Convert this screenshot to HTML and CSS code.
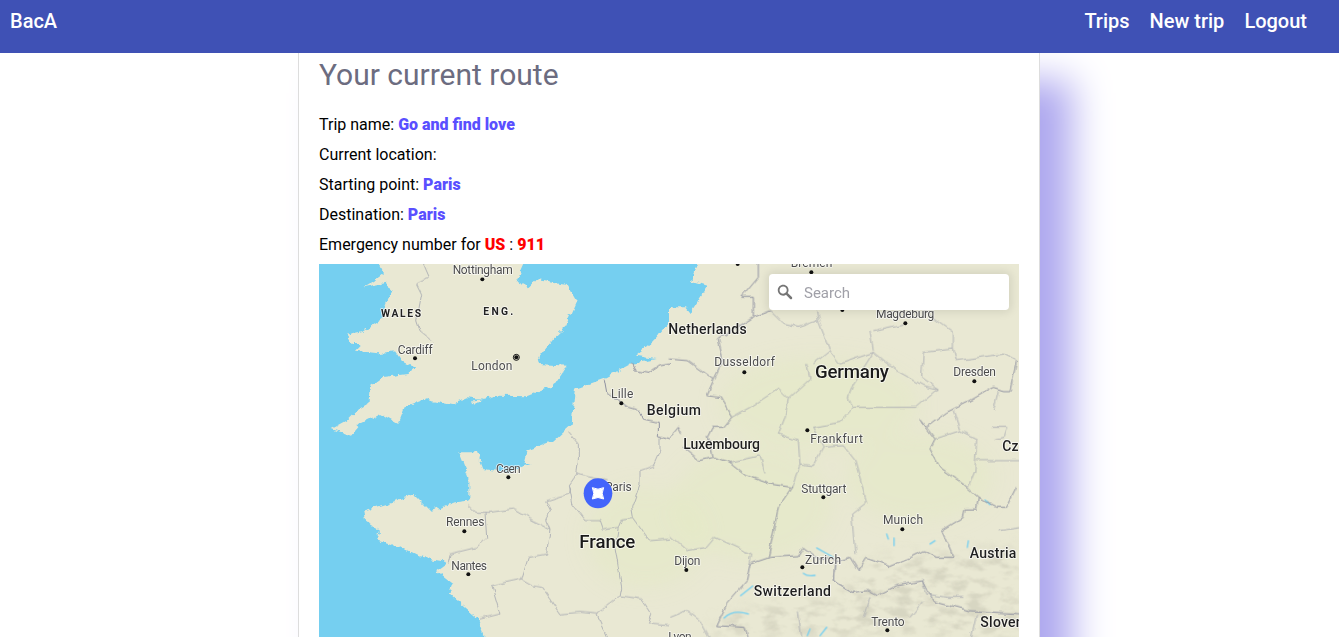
FILE: index.html
```html
<!DOCTYPE html>
<html lang="en">
<head>
    <meta charset="UTF-8">
    <meta name="viewport" content="width=device-width, initial-scale=1.0">
    <title>BacA</title>
    <link rel="stylesheet" href="styles.css">
</head>
<body>
    <nav class="navbar">
        <a class="brand" href="#">BacA</a>
        <div class="nav-links">
            <a href="#">Trips</a>
            <a href="#">New trip</a>
            <a href="#">Logout</a>
        </div>
    </nav>

    <main class="card">
        <h3 class="title">Your current route</h3>
        <div class="details">
            <p>Trip name: <b class="hl">Go and find love</b></p>
            <p>Current location:</p>
            <p>Starting point: <b class="hl">Paris</b></p>
            <p>Destination: <b class="hl">Paris</b></p>
            <p>Emergency number for <b class="danger">US</b> : <b class="danger">911</b></p>
        </div>

        <div class="map">
            <svg class="map-svg" viewBox="0 0 2100 1119" aria-hidden="true">
                <defs>
                    <filter id="soft" x="-30%" y="-30%" width="160%" height="160%"><feGaussianBlur stdDeviation="28"/></filter>
                    <filter id="coast" filterUnits="userSpaceOnUse" x="-60" y="-80" width="2240" height="1280">
                        <feTurbulence type="fractalNoise" baseFrequency="0.045" numOctaves="3" seed="7"/>
                        <feDisplacementMap in="SourceGraphic" scale="20" xChannelSelector="R" yChannelSelector="G"/>
                    </filter>
                    <filter id="wiggle" filterUnits="userSpaceOnUse" x="-60" y="-80" width="2240" height="1280">
                        <feTurbulence type="fractalNoise" baseFrequency="0.03" numOctaves="2" seed="3"/>
                        <feDisplacementMap in="SourceGraphic" scale="16" xChannelSelector="R" yChannelSelector="G"/>
                    </filter>
                    <filter id="ridges" filterUnits="userSpaceOnUse" x="0" y="0" width="2100" height="1119">
                        <feGaussianBlur in="SourceAlpha" stdDeviation="22" result="mask"/>
                        <feTurbulence type="fractalNoise" baseFrequency="0.018 0.035" numOctaves="4" seed="11"/>
                        <feColorMatrix values="0 0 0 0 0.68  0 0 0 0 0.67  0 0 0 0 0.54  0 0 0 3.6 -1.6"/>
                        <feComposite in2="mask" operator="in"/>
                    </filter>
                </defs>
                <rect class="water" width="2100" height="1119"/>

                <g transform="translate(3 0)" filter="url(#coast)">
                    <path class="land" d="M155 -50L192 28 165 48 130 70 200 56 212 85 195 130 185 165 125 205 78 215 95 240 125 240 105 260 175 268 225 262 245 290 300 318 340 250 310 292 262 330 185 340 150 365 145 420 110 440 80 470 35 495 90 515 120 480 180 450 235 480 255 430 320 405 395 420 440 400 490 405 530 395 620 397 700 365 740 305 660 300 655 280 700 222 735 190 770 110 740 60 650 45 625 70 590 50 635 -50Z"/>
                    <path class="land" d="M415 565L470 565 490 615 565 625 635 600 610 600 620 560 700 530 755 480 765 375 850 345 935 300 1010 285 945 275 1000 230 1050 170 1050 130 1095 130 1110 148 1163 65 1113 50 1148 -50 2150 -50 2150 1170 510 1170 470 1060 390 990 400 960 350 920 385 895 300 880 240 850 170 830 180 800 135 770 130 740 200 720 285 690 335 740 405 715 445 710 445 640Z"/>
                    <path class="isle" d="M450 408L490 405 480 420 460 420Z"/>
                </g>

                <g class="tint" filter="url(#soft)">
                    <ellipse cx="1500" cy="420" rx="300" ry="140"/>
                    <ellipse cx="1300" cy="720" rx="240" ry="170"/>
                    <ellipse cx="1800" cy="640" rx="220" ry="130"/>
                    <ellipse cx="980" cy="820" rx="180" ry="150"/>
                </g>
                <path class="alps" filter="url(#ridges)" d="M1180 1119L1210 1050 1400 1010 1560 1000 1640 890 2100 850 2100 1119Z"/>

                <g transform="translate(1053 0)">
                    <path class="lake" d="M440 852L490 880M400 928Q412 938 435 934M212 995L248 966M162 1062Q190 1035 235 1050M650 810L655 825M672 822L672 845M780 840L795 830M945 708L960 722M895 830L892 850M420 1095L412 1115M470 1090L450 1115"/>
                </g>

                <g filter="url(#wiggle)">
                    <g transform="translate(3 0)" class="borders">
                        <path d="M302 -20L328 40 290 60 305 90 290 170 300 200 340 232"/>
                        <path d="M745 505L775 540 775 595 770 630 810 640 860 650M770 630L745 665 755 720 795 770 840 770 850 798 895 790 905 765 940 760 935 730 960 660 960 620 1000 605 1020 560 1020 520"/>
                        <path d="M445 725L465 745 510 745 580 735 640 770 690 795 680 770 695 740 680 710 745 690 750 670"/>
                        <path d="M690 795L680 870 625 880 605 945 640 965 665 970 720 1050 780 1045 830 1050 870 1140"/>
                        <path d="M495 745L500 820 470 850 390 870 385 895M605 945L515 965 540 1050 480 1065"/>
                        <path d="M895 790L885 850 905 970 900 995 830 1050M900 995L965 1005 995 1050 985 1080 1050 1085M940 760L990 830 1050 825"/>
                    </g>
                    <g transform="translate(3 0)" class="borders strong">
                        <path d="M853 345L860 385 925 430 960 440 970 465 1015 475 1015 515 1050 525M935 300L945 320 985 328 1020 305 1050 300"/>
                    </g>
                    <g transform="translate(1053 0)" class="borders">
                        <path d="M185 460L240 430 325 375 355 405 345 460 325 510 385 530 390 600 365 670M390 600L430 605 460 550 520 545 555 590 590 715 545 750 555 870"/>
                        <path d="M410 300L420 345 355 405M300 140L340 180 385 190 445 170 480 260 430 300M480 260L510 300 610 265 640 290 680 320 760 365 805 375 740 430 550 430 510 475 430 490 460 550"/>
                        <path d="M550 430L535 400 550 360 610 265M760 265L850 255 860 290 1000 270 1040 290M760 265L755 340 805 375M600 200L610 260M760 140L850 205 850 255M445 170L440 138M610 200L700 180"/>
                        <path d="M795 525L870 500 920 525 915 620 895 670M870 500L850 440M970 490L1010 490 1000 520 975 525M920 590L1060 590M985 800L1060 790 1060 850"/>
                        <path d="M0 815L50 860 110 850 135 820 245 870 240 900M1 1060L50 1040 90 1070 125 1130M180 595L270 575 285 625M970 440L985 380"/>
                        <path d="M495 890L490 950 550 985M760 950L770 990 830 1000 880 1000M600 1000L580 1060M385 1045L395 1120M720 1060L760 1010M900 1140L920 1050"/>
                    </g>
                    <g transform="translate(1053 0)" class="borders strong">
                        <path d="M300 140L250 160 250 100 215 100 265 40 265 -20M250 160L145 225 160 290 130 350 110 395 150 400 185 460 160 490 130 490 115 520 130 580M0 285L55 290 130 345M0 520L25 490 35 510M40 550L90 590 130 580 180 595 230 635 300 660 365 670 325 730 295 880"/>
                        <path d="M750 465L795 525 780 555 810 610 880 660 925 700 920 735 885 735 880 760 815 800 850 880 800 880 760 860 720 880 660 905 590 880 565 920 540 880 510 890 440 880 400 850 385 875 300 880"/>
                        <path d="M750 465L770 490 830 445 900 410 970 370 1000 380 1020 380 1040 290M925 700L980 730 1010 730 1040 670"/>
                        <path d="M300 880L240 900 230 950 170 1020 140 1085 225 1090 240 1140M495 890L490 950 550 985 590 980 620 995 680 965 760 950 790 1010 900 1040 1060 1050"/>
                    </g>
                </g>

                <g transform="translate(3 0)">
                    <text class="city" x="398" y="28" textLength="180">Nottingham</text>
                    <text class="area" x="183" y="157" textLength="120">WALES</text>
                    <text class="area" x="490" y="150" textLength="90">ENG.</text>
                    <text class="city" x="233" y="267" textLength="105">Cardiff</text>
                    <text class="city" x="454" y="317" textLength="123">London</text>
                    <text class="city" x="873" y="400" textLength="67">Lille</text>
                    <text class="city" x="528" y="624" textLength="74">Caen</text>
                    <text class="city" x="855" y="678" textLength="80">Paris</text>
                    <text class="city" x="378" y="785" textLength="115">Rennes</text>
                    <text class="city" x="394" y="916" textLength="107">Nantes</text>
                    <text class="state" x="980" y="450" textLength="163">Belgium</text>
                    <text class="country" x="778" y="850" textLength="168">France</text>
                    <g class="dots">
                        <circle cx="487" cy="46" r="6"/><circle cx="285" cy="283" r="6"/>
                        <circle cx="904" cy="418" r="6"/><circle cx="565" cy="640" r="6"/>
                        <circle cx="433" cy="802" r="6"/><circle cx="445" cy="931" r="6"/>
                        <circle cx="589" cy="280" r="6"/>
                    </g>
                    <circle class="capital" cx="589" cy="280" r="9"/>
                </g>

                <g transform="translate(1053 0)">
                    <text class="city" x="362" y="8" textLength="125">Bremen</text>
                    <text class="state" x="-5" y="208" textLength="235">Netherlands</text>
                    <text class="city" x="133" y="305" textLength="182">Dusseldorf</text>
                    <text class="country" x="435" y="342" textLength="222">Germany</text>
                    <text class="city" x="618" y="162" textLength="175">Magdeburg</text>
                    <text class="city" x="850" y="335" textLength="128">Dresden</text>
                    <text class="city" x="421" y="535" textLength="158">Frankfurt</text>
                    <text class="state" x="40" y="553" textLength="230">Luxembourg</text>
                    <text class="state" x="997" y="558">Cz</text>
                    <text class="city" x="394" y="685" textLength="135">Stuttgart</text>
                    <text class="city" x="639" y="779" textLength="120">Munich</text>
                    <text class="state" x="899" y="880" textLength="140">Austria</text>
                    <text class="city" x="13" y="900" textLength="78">Dijon</text>
                    <text class="city" x="405" y="898" textLength="108">Zurich</text>
                    <text class="state" x="251" y="995" textLength="232">Switzerland</text>
                    <text class="city" x="604" y="1083" textLength="100">Trento</text>
                    <text class="state" x="931" y="1087" textLength="130">Sloven</text>
                    <text class="city" x="-5" y="1128" textLength="70">Lyon</text>
                    <g class="dots">
                        <circle cx="203" cy="0" r="6"/><circle cx="424" cy="25" r="6"/>
                        <circle cx="517" cy="138" r="6"/><circle cx="706" cy="178" r="6"/>
                        <circle cx="223" cy="325" r="6"/><circle cx="913" cy="352" r="6"/>
                        <circle cx="412" cy="499" r="6"/><circle cx="460" cy="700" r="6"/>
                        <circle cx="697" cy="796" r="6"/><circle cx="49" cy="918" r="6"/>
                        <circle cx="397" cy="910" r="6"/><circle cx="652" cy="1099" r="6"/>
                    </g>
                </g>

                <ellipse class="marker" cx="837" cy="688" rx="43" ry="45"/>
                <path class="marker-star" d="M820 671Q837 680 854 671 845 688 854 705 837 696 820 705 829 688 820 671Z"/>
            </svg>

            <div class="search">
                <svg class="search-icon" viewBox="0 0 18 18" aria-hidden="true">
                    <path d="M7.4 2.5c-2.7 0-4.9 2.2-4.9 4.9s2.2 4.9 4.9 4.9c1 0 1.8-.2 2.5-.8l3.7 3.7c.2.2.4.3.8.3.7 0 1.1-.4 1.1-1.1 0-.3-.1-.5-.3-.8L11.4 10c.4-.8.8-1.6.8-2.5.1-2.8-2.1-5-4.8-5zm0 1.6c1.8 0 3.2 1.4 3.2 3.2s-1.4 3.2-3.2 3.2-3.3-1.3-3.3-3.1 1.4-3.3 3.3-3.3z"/>
                </svg>
                <input type="text" class="search-input" placeholder="Search">
            </div>
        </div>
    </main>
</body>
</html>
```

FILE: styles.css
```css
html, body {
    height: 100%;
    overflow: hidden;
}

body {
    margin: 0;
    background: white;
    font-family: Roboto, "Liberation Sans", sans-serif;
    font-size: 16px;
    color: black;
}

.navbar {
    position: relative;
    z-index: 2;
    display: flex;
    justify-content: space-between;
    height: 53px;
    box-sizing: border-box;
    padding: 6px 32px 0 10px;
    background-color: #3f51b5;
}

.navbar a {
    color: white;
    font-size: 20px;
    font-weight: 500;
    line-height: 30px;
    text-decoration: none;
}

.nav-links {
    display: flex;
    gap: 20px;
}

.card {
    width: 700px;
    margin: 0 299px 0 298px;
    padding: 0 20px 20px;
    background: white;
    border-left: 1px solid #ddd;
    border-right: 1px solid #ddd;
    box-shadow: 32px 27px 36px #aea8ef;
}

.title {
    margin: 0 0 17px;
    font-size: 30px;
    font-weight: 400;
    line-height: 43px;
    color: #6c6c80;
}

.details {
    display: flex;
    flex-direction: column;
    gap: 6px;
    padding-bottom: 7px;
}

.details p {
    margin: 0;
    line-height: 24px;
}

.hl {
    color: #5a4fff;
    font-weight: 900;
}

.danger {
    color: #ff0000;
    font-weight: 900;
}

.map {
    position: relative;
    height: 373px;
    overflow: hidden;
}

.map-svg {
    display: block;
    width: 700px;
    height: 373px;
}

.water {
    fill: #75cff0;
}

.land {
    fill: #e9e8d3;
}

.isle {
    fill: #e9e8d3;
    stroke: #75cff0;
    stroke-width: 3;
}

.tint ellipse {
    fill: #e3e9c4;
    opacity: 0.55;
}

.lake {
    fill: none;
    stroke: #75cff0;
    stroke-width: 4;
    stroke-linecap: round;
}

.borders path {
    fill: none;
    stroke: #a9abb3;
    stroke-width: 2.6;
    stroke-linejoin: round;
}

.borders.strong path {
    stroke: #8f91a0;
    stroke-width: 3;
}

.map-svg text {
    font-family: Roboto, sans-serif;
    paint-order: stroke;
    stroke: rgba(255, 255, 255, 0.75);
    stroke-width: 5px;
    stroke-linejoin: round;
    transform: translateY(1.5px);
}

.city {
    font-size: 36px;
    fill: #4c4c4c;
}

.area {
    font-size: 31px;
    font-weight: 700;
    fill: #222;
}

.state {
    font-size: 42px;
    font-weight: 500;
    fill: #1f1f1f;
}

.country {
    font-size: 56px;
    font-weight: 500;
    fill: #1a1a1a;
}

.dots circle {
    fill: #111;
}

.capital {
    fill: none;
    stroke: #111;
    stroke-width: 3;
}

.marker {
    fill: #4264fb;
}

.marker-star {
    fill: white;
    stroke: white;
    stroke-width: 3;
    stroke-linejoin: round;
}

.search {
    position: absolute;
    top: 10px;
    right: 10px;
    width: 240px;
    height: 36px;
    background: white;
    border-radius: 4px;
    box-shadow: 0 0 10px 2px rgba(0, 0, 0, 0.1);
}

.search-icon {
    position: absolute;
    top: 8px;
    left: 6px;
    width: 20px;
    height: 20px;
    fill: #757575;
}

.search-input {
    width: 100%;
    height: 36px;
    box-sizing: border-box;
    padding: 2px 10px 0 35px;
    border: none;
    border-radius: 4px;
    background: transparent;
    font-family: Roboto, sans-serif;
    font-size: 15px;
    color: #404040;
}

.search-input::placeholder {
    color: #a0a0a8;
    opacity: 1;
}
```
